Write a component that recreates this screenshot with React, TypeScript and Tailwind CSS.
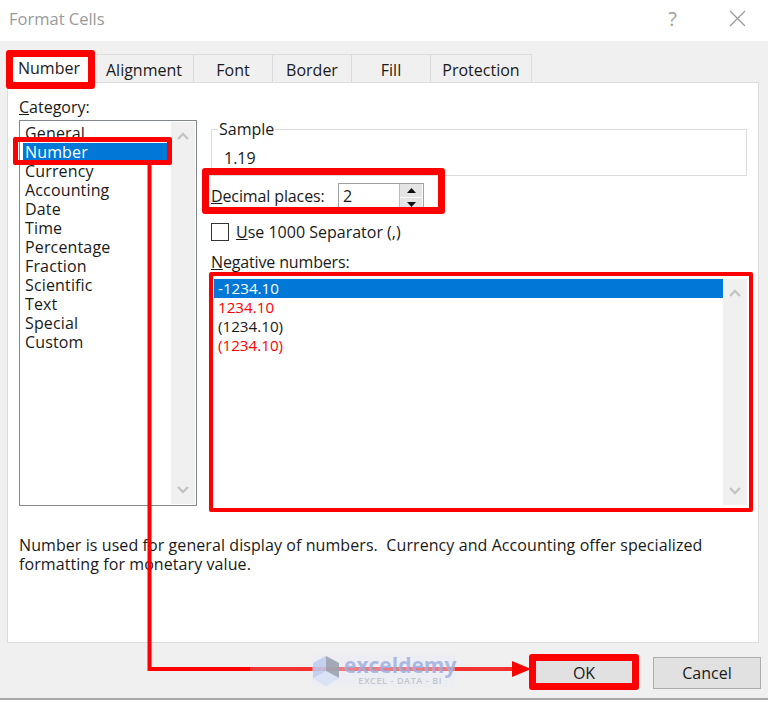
const cats = ["General","Number","Currency","Accounting","Date","Time","Percentage","Fraction","Scientific","Text","Special","Custom"];
const negs: [string,string][] = [["-1234.10","text-white"],["1234.10","text-[#ff0000]"],["(1234.10)","text-[#1a1a1a]"],["(1234.10)","text-[#ff0000]"]];
const tabs: [string,string][] = [["Alignment","w-[99px]"],["Font","w-[79px]"],["Border","w-[79px]"],["Fill","w-[79px]"],["Protection","w-[101px]"]];

function Scrollbar({h}:{h:string}) {
  return (
    <div className={`w-[24px] bg-[#f0f0f0] flex flex-col justify-between items-center py-[10px] ${h}`}>
      <svg width="12" height="8" viewBox="0 0 12 8"><path d="M1 7L6 2L11 7" fill="none" stroke="#c4c4c4" strokeWidth="2.4"/></svg>
      <svg width="12" height="8" viewBox="0 0 12 8"><path d="M1 1L6 6L11 1" fill="none" stroke="#c4c4c4" strokeWidth="2.4"/></svg>
    </div>
  );
}

export default function App() {
  return (
    <div className="relative w-[768px] h-[702px] overflow-hidden bg-white text-[16px] leading-[19px] text-[#1a1a1a]" style={{fontFamily:'"Open Sans","Noto Sans",sans-serif'}}>
      <div className="h-[41px] flex items-center justify-between pl-[9px] pr-[22px] pb-[5px] text-[#9a9a9a]">
        <span className="text-[16.5px]">Format Cells</span>
        <div className="flex items-center gap-[52px]">
          <span className="text-[20px] text-[#a0a0a0]">?</span>
          <svg width="17" height="17" viewBox="0 0 17 17"><path d="M1 1L16 16M16 1L1 16" stroke="#9a9a9a" strokeWidth="1.3"/></svg>
        </div>
      </div>

      <div className="h-[659px] bg-[#f0f0f0] border-b-[2px] border-[#a8a8a8] flex flex-col px-[7px]">
        <div className="h-[41px] pt-[13px] flex items-stretch">
          <div className="w-[88px] bg-white flex items-center justify-center pr-[4px]">Number</div>
          {tabs.map(([t,w]) => (
            <div key={t} className={`${w} border-t-[1px] border-r-[1px] border-[#dcdcdc] flex items-center justify-center pt-[4px]`}>{t}</div>
          ))}
        </div>
        <div className="w-[752px] h-[561px] bg-white border-[1px] border-[#dcdcdc] flex flex-col">
          <div className="flex pl-[11px] pt-[15px] h-[436px]">
            <div className="w-[178px]">
              <div className="h-[22px] leading-[19px]"><span className="underline">C</span>ategory:</div>
              <div className="h-[386px] border-[1px] border-[#82878c] p-[1px] flex">
                <div className="flex-1 pt-[2px] pl-[2px] overflow-hidden tracking-[0.15px]">
                  {cats.map((c,i) => (
                    <div key={c} className={`h-[19px] pl-[2px] ${i===1?"bg-[#0078d7] text-white":""}`}>{c}</div>
                  ))}
                </div>
                <Scrollbar h="h-[382px]" />
              </div>
            </div>
            <div className="ml-[14px] w-[536px] relative">
              <div className="absolute left-[7px] top-[22px] bg-white px-[1px]">Sample</div>
              <div className="mt-[31px] h-[47px] border-[1px] border-[#dcdcdc] pl-[12px] pt-[19px]">1.19</div>
              <div className="mt-[7px] h-[28px] flex items-start">
                <span className="w-[127px] pt-[4px] tracking-[-0.12px]"><span className="underline">D</span>ecimal places:</span>
                <div className="w-[86px] h-[28px] border-[1px] border-[#a0a0a0] flex justify-between pl-[4px] pr-[1px]">
                  <span className="pt-[3px]">2</span>
                  <div className="w-[23px] flex flex-col gap-[1px] border-l-[1px] border-[#bdbdbd]">
                    <div className="h-[13px] bg-[#e4e4e4] flex items-center justify-center">
                      <svg width="9" height="5" viewBox="0 0 9 5"><path d="M4.5 0L9 5H0Z" fill="#111"/></svg>
                    </div>
                    <div className="h-[12px] bg-[#e4e4e4] flex items-center justify-center">
                      <svg width="9" height="5" viewBox="0 0 9 5"><path d="M0 0H9L4.5 5Z" fill="#111"/></svg>
                    </div>
                  </div>
                </div>
              </div>
              <div className="mt-[12px] flex items-center h-[18px]">
                <div className="w-[18px] h-[18px] border-[1px] border-[#333] bg-white"></div>
                <span className="ml-[7px]"><span className="underline">U</span>se 1000 Separator (,)</span>
              </div>
              <div className="mt-[12px] h-[20px] tracking-[-0.15px]"><span className="underline">N</span>egative numbers:</div>
              <div className="ml-[2px] h-[234px] flex w-[534px] pt-[6px] pl-[1px] text-[15.2px]">
                <div className="flex-1">
                  {negs.map(([n,c],i) => (
                    <div key={i} className={`h-[19px] pl-[4px] ${c} ${i===0?"bg-[#0078d7]":""}`}>{n}</div>
                  ))}
                </div>
                <Scrollbar h="h-[226px]" />
              </div>
            </div>
          </div>
          <div className="pl-[11px] mt-[17px] w-[720px] tracking-[0.08px]">
            Number is used for general display of numbers.&nbsp; Currency and Accounting offer specialized formatting for monetary value.
          </div>
        </div>
        <div className="flex justify-end gap-[15px] pt-[14px]">
          <div className="w-[108px] h-[32px] bg-[#e1e1e1] border-[1px] border-[#adadad] flex items-center justify-center">OK</div>
          <div className="w-[108px] h-[32px] bg-[#e1e1e1] border-[1px] border-[#adadad] flex items-center justify-center">Cancel</div>
        </div>
      </div>

      {/* annotation arrow */}
      <svg className="absolute left-0 top-0 pointer-events-none" width="768" height="702" viewBox="0 0 768 702">
        <path d="M149.5 163V669H250" fill="none" stroke="#ff0000" strokeWidth="4"/>
        <path d="M250 669H514" fill="none" stroke="#f53030" strokeWidth="4"/>
        <path d="M512 661L531 669L512 677Z" fill="#ff0000"/>
      </svg>

      {/* watermark */}
      <div className="absolute left-[312px] top-[655px] w-[143px] h-[32px] bg-[#e6eaf8]/40 flex items-center">
        <svg width="28" height="32" viewBox="0 0 28 32" className="shrink-0">
          <path d="M14 1L27 8V23L14 31L1 23V8Z" fill="#b9c9ec" fillOpacity="0.8"/>
          <path d="M14 1L27 8V23L14 16Z" fill="#8f8f8f" fillOpacity="0.6"/>
          <path d="M1 23L14 16L27 23L14 31Z" fill="#dde6f6" fillOpacity="0.9"/>
        </svg>
        <div className="ml-[4px] flex flex-col items-center h-[32px]">
          <span className="text-[21px] leading-[21px] font-bold text-[#a0aee0]/85">exceldemy</span>
          <span className="text-[9px] leading-[10px] tracking-[0.6px] font-semibold text-[#c3c6cc]">EXCEL - DATA - BI</span>
        </div>
      </div>

      {/* annotation boxes */}
      <div className="absolute left-[6px] top-[50px] w-[89px] h-[39px] border-[7px] border-[#ff0000] rounded-[3px]"></div>
      <div className="absolute left-[13px] top-[137px] w-[159px] h-[28px] border-[5px] border-[#ff0000] rounded-[2px]"></div>
      <div className="absolute left-[202px] top-[168px] w-[243px] h-[46px] border-[7px] border-[#ff0000] rounded-[3px]"></div>
      <div className="absolute left-[209px] top-[272px] w-[544px] h-[240px] border-[4px] border-[#ff0000] rounded-[2px]"></div>
      <div className="absolute left-[529px] top-[654px] w-[110px] h-[36px] border-[7px] border-[#ff0000] rounded-[3px]"></div>
    </div>
  );
}
